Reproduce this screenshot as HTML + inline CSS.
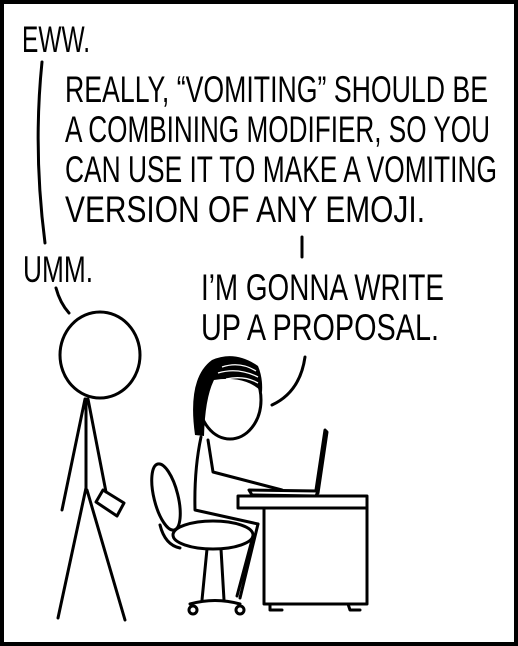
<!DOCTYPE html>
<html><head><style>
html,body{margin:0;padding:0;background:#fff;}
svg{display:block;}
text{font-family:"Liberation Sans",sans-serif;font-size:37px;fill:#000;}
</style></head><body>
<svg width="518" height="646" viewBox="0 0 518 646" xmlns="http://www.w3.org/2000/svg">
<rect x="2" y="2" width="514" height="642" fill="#fff" stroke="#000" stroke-width="4"/>
<text x="22" y="52" textLength="68" lengthAdjust="spacingAndGlyphs">EWW.</text>
<text x="65" y="102" textLength="423" lengthAdjust="spacingAndGlyphs">REALLY, “VOMITING” SHOULD BE</text>
<text x="65" y="142" textLength="425" lengthAdjust="spacingAndGlyphs">A COMBINING MODIFIER, SO YOU</text>
<text x="65" y="182" textLength="432" lengthAdjust="spacingAndGlyphs">CAN USE IT TO MAKE A VOMITING</text>
<text x="65" y="222" textLength="360" lengthAdjust="spacingAndGlyphs">VERSION OF ANY EMOJI.</text>
<text x="23" y="282" textLength="70" lengthAdjust="spacingAndGlyphs">UMM.</text>
<text x="201" y="300" textLength="243" lengthAdjust="spacingAndGlyphs">I’M GONNA WRITE</text>
<text x="201" y="340" textLength="238" lengthAdjust="spacingAndGlyphs">UP A PROPOSAL.</text>
<g fill="none" stroke="#000" stroke-width="3" stroke-linecap="round" stroke-linejoin="round">
<path d="M42 62 Q33 150 45 243"/>
<path d="M302 237 L302 257"/>
<path d="M56 288 Q60 303 69 313"/>
<path d="M305 357 Q300 392 272 405"/>
<!-- man -->
<ellipse cx="100" cy="355" rx="40" ry="43"/>
<path d="M85 399 L62 510"/>
<path d="M88 399 L106 492"/>
<path d="M86 399 L86 488 L58 618"/>
<path d="M87 490 L125 620"/>
<path d="M96 502 L103 490 L124 503 L117 516 Z"/>
<!-- woman -->
<ellipse cx="230" cy="400" rx="31" ry="39"/>
<path d="M201 437 Q194 470 195 510 L258 524"/>
<path d="M208 440 L213 472 L236 478 L282 490"/>
<path d="M258 524 L240 598 M252 540 L237 596"/>
<!-- chair -->
<ellipse cx="166" cy="497" rx="12" ry="34" transform="rotate(-14 166 497)"/>
<ellipse cx="213" cy="535" rx="40" ry="14"/>
<path d="M160 525 Q165 545 180 548"/>
<path d="M207 549 L202 600 M221 549 L224 600"/>
<path d="M190 604 Q215 597 240 604"/>
<circle cx="193" cy="610" r="4"/><circle cx="240" cy="610" r="4"/>
<!-- desk -->
<rect x="238" y="496" width="129" height="12"/>
<rect x="264" y="508" width="103" height="96"/>
<path d="M270 604 L270 610 L282 610 M348 604 L350 610 L360 610"/>
<!-- laptop -->
<path d="M325 430 L327 432 L318 493 L316 490 Z"/>
<path d="M249 490 L318 491 L316 496 L252 495 Z"/>
</g>
<path d="M195 435 Q187 378 212 360 Q235 350 258 366 Q263 378 262 392 Q245 375 214 380 Q205 398 204 436 Z" fill="#000"/>
<g stroke="#fff" stroke-width="1.3" fill="none">
<path d="M222 367 Q240 361 256 371"/><path d="M218 373 Q238 367 258 377"/><path d="M226 379 Q244 375 258 383"/>
</g>
</svg>
</body></html>
